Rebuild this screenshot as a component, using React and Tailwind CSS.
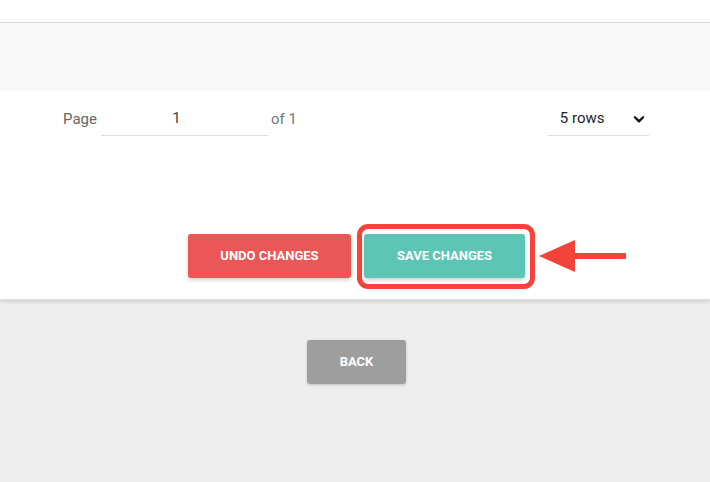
import React from 'react';

export default function App() {
  return (
    <div className="w-[710px] h-[482px] overflow-hidden bg-[#eeeeee] font-['Roboto','Liberation_Sans',sans-serif]">
      {/* top strip */}
      <div className="h-[23px] bg-white border-b border-[#d4d4d4]" />
      <div className="h-[68px] bg-[#f9f9f9]" />

      {/* table footer panel */}
      <div className="h-[209px] bg-white shadow-[0_2px_3px_rgba(0,0,0,0.12)] border-b border-[#e2e2e2] relative">
        <div className="flex items-center pt-[11px]">
          <span className="ml-[63px] text-[15px] text-[#666]">Page</span>
          <div className="ml-[4px] w-[167px] h-[34px] border-b border-[#dcdcdc] flex items-center justify-center pr-[16px] text-[15px] text-[#444]">
            1
          </div>
          <span className="ml-[3px] text-[15px] text-[#777]">of 1</span>
          <div className="ml-[251px] w-[101px] h-[34px] border-b border-[#dcdcdc] flex items-center justify-between pl-[12px] pr-[3px] text-[15px] text-[#222]">
            <span>5 rows</span>
            <svg width="14" height="14" viewBox="0 0 24 24" fill="none" stroke="#111" strokeWidth="4" strokeLinecap="round" strokeLinejoin="round">
              <path d="M5 9l7 7 7-7" />
            </svg>
          </div>
        </div>

        <div className="flex items-center mt-[98px] ml-[188px]">
          <button className="w-[163px] h-[44px] rounded-[3px] bg-[#eb5757] text-white text-[13px] font-bold shadow-[0_2px_4px_rgba(0,0,0,0.2)]">
            UNDO CHANGES
          </button>
          <div className="relative ml-[13px]">
            <div className="absolute left-[-7px] top-[-10px] right-[-10px] bottom-[-11px] border-[5px] border-[#f4433a] rounded-[11px]" />
            <button className="relative w-[161px] h-[44px] rounded-[3px] bg-[#5cc5b6] text-white text-[13px] font-bold shadow-[0_2px_4px_rgba(0,0,0,0.2)]">
              SAVE CHANGES
            </button>
          </div>
          <svg className="ml-[14px]" width="88" height="34" viewBox="0 0 88 34">
            <polygon points="0,17 36,1 36,33" fill="#f4433a" />
            <rect x="34" y="14" width="53" height="6" fill="#f4433a" />
          </svg>
        </div>
      </div>

      <div className="flex justify-center pt-[40px] pl-[3px]">
        <button className="w-[99px] h-[44px] rounded-[3px] bg-[#9e9e9e] text-white text-[13px] font-bold shadow-[0_1px_3px_rgba(0,0,0,0.2)]">
          BACK
        </button>
      </div>
    </div>
  );
}
